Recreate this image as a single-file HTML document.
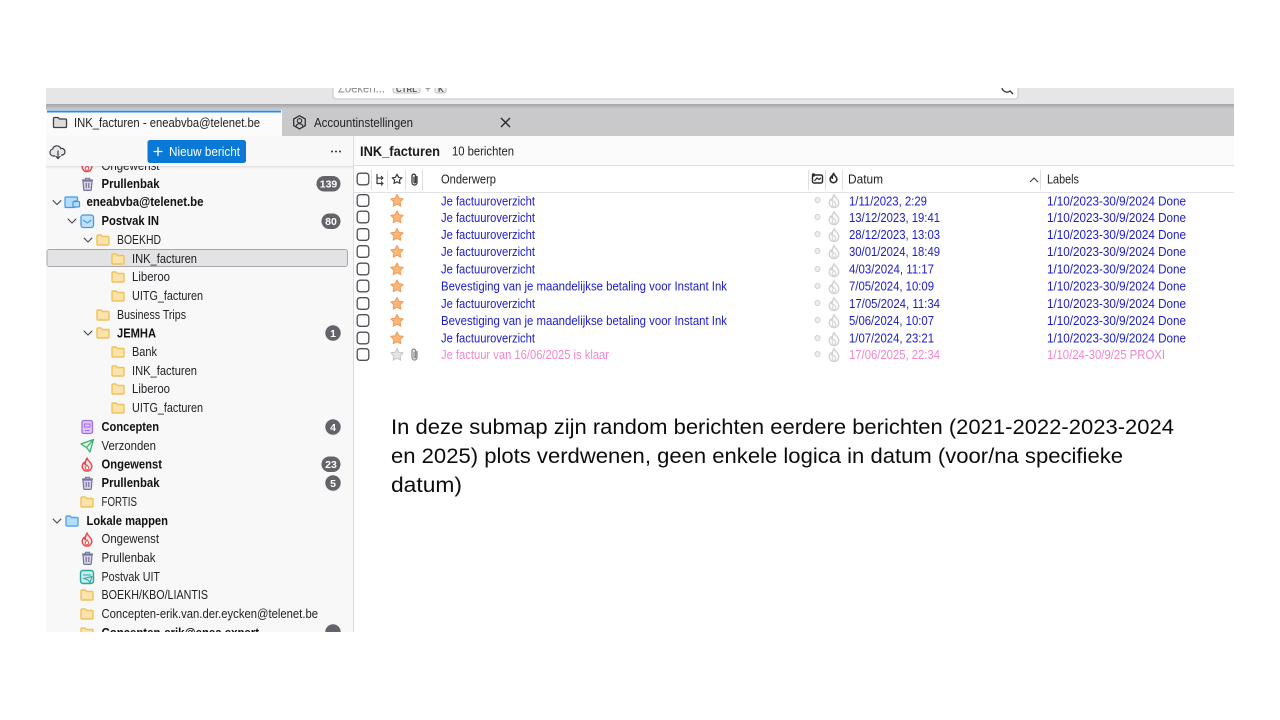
<!DOCTYPE html>
<html lang="nl"><head><meta charset="utf-8"><title>INK_facturen</title>
<style>
html,body{margin:0;padding:0;background:#fff;width:1280px;height:720px;overflow:hidden}
svg{display:block;filter:blur(.3px)}
text{font-family:"Liberation Sans",sans-serif;font-size:12.6px;fill:#222226}
.b{font-weight:bold;fill:#111114}
.r{fill:#1c1cca}
.p{fill:#f286cb}
.w{fill:#fff;font-weight:bold;font-size:10.5px;text-anchor:middle}
.big{font-size:21.5px;fill:#0c0c0c}
</style></head><body>
<svg width="1280" height="720" viewBox="0 0 1280 720" xmlns="http://www.w3.org/2000/svg">
<defs>
<linearGradient id="sh" x1="0" y1="0" x2="0" y2="1"><stop offset="0" stop-color="#000" stop-opacity=".1"/><stop offset="1" stop-color="#000" stop-opacity="0"/></linearGradient>
<linearGradient id="tabsh" x1="0" y1="0" x2="0" y2="1"><stop offset="0" stop-color="#a4a4a6"/><stop offset="1" stop-color="#c9c9cb"/></linearGradient>
<symbol id="folder" viewBox="0 0 14 12" overflow="visible"><path d="M1 3V2a1 1 0 0 1 1-1h3l1.500 1.500H12a1 1 0 0 1 1 1V10a1 1 0 0 1-1 1H2a1 1 0 0 1-1-1z" fill="#fbe3ac" stroke="#f0c35a" stroke-width="1.400"/></symbol>
<symbol id="bfolder" viewBox="0 0 14 12" overflow="visible"><path d="M1 3V2a1 1 0 0 1 1-1h3l1.500 1.500H12a1 1 0 0 1 1 1V10a1 1 0 0 1-1 1H2a1 1 0 0 1-1-1z" fill="#b6dcfa" stroke="#58a6e8" stroke-width="1.400"/></symbol>
<symbol id="trash" viewBox="0 0 14 14" overflow="visible"><path d="M2.500 4h9l-.7 8.500a1 1 0 0 1-1 .9H4.200a1 1 0 0 1-1-.9z" fill="#d6d3ea" stroke="#77749a" stroke-width="1.200"/><path d="M1.500 3h11M5 2.800V1.300h4v1.500M5.700 6v5M8.300 6v5" fill="none" stroke="#77749a" stroke-width="1.200"/></symbol>
<symbol id="fire" viewBox="0 0 14 14" overflow="visible"><path d="M7 .8c.6 2.500 4.800 4 4.800 8a4.800 4.800 0 0 1-9.600 0c0-1.800 1-3 1.800-3.800.2 1 .6 1.600 1.300 2C5.200 4.800 5.800 2.500 7 .8z" fill="#fde3e3" stroke="#e5484d" stroke-width="1.400"/><path d="M7 7.500c.4 1 1.800 1.600 1.800 3a1.800 1.800 0 0 1-3.600 0c0-1.200 1.300-1.800 1.800-3z" fill="#fff" stroke="#e5484d" stroke-width="1"/></symbol>
<symbol id="gfire" viewBox="0 0 14 14" overflow="visible"><path d="M7 .8c.6 2.500 4.800 4 4.800 8a4.800 4.800 0 0 1-9.600 0c0-1.800 1-3 1.800-3.800.2 1 .6 1.600 1.300 2C5.200 4.800 5.800 2.500 7 .8z" fill="#fafafa" stroke="#d0d0d4" stroke-width="1.300"/><path d="M7 7.500c.4 1 1.800 1.600 1.800 3a1.800 1.800 0 0 1-3.600 0c0-1.200 1.300-1.800 1.800-3z" fill="#fff" stroke="#d0d0d4" stroke-width="1"/></symbol>
<symbol id="star" viewBox="0 0 14 14" overflow="visible"><path d="M7 .9l1.900 3.900 4.300.6-3.100 3 .7 4.300L7 10.700l-3.800 2 .7-4.300-3.100-3 4.300-.6z" fill="#fdb578" stroke="#f09a58" stroke-width="1" stroke-linejoin="round"/></symbol>
<symbol id="gstar" viewBox="0 0 14 14" overflow="visible"><path d="M7 .9l1.900 3.900 4.300.6-3.100 3 .7 4.300L7 10.700l-3.800 2 .7-4.300-3.100-3 4.300-.6z" fill="#e6e6ea" stroke="#c4c4ca" stroke-width="1" stroke-linejoin="round"/></symbol>
<symbol id="clip" viewBox="0 0 10 14" overflow="visible"><path d="M7.500 4v6a2.500 2.500 0 0 1-5 0V3.500a1.800 1.800 0 0 1 3.600 0V9.500a.8.8 0 0 1-1.600 0V4.500" fill="none" stroke="currentColor" stroke-width="1.300" stroke-linecap="round"/></symbol>
<symbol id="cb" viewBox="0 0 13 13" overflow="visible"><rect x=".7" y=".7" width="11.600" height="11.600" rx="2.800" fill="#fff" stroke="#4e4e55" stroke-width="1.300"/></symbol>
<symbol id="chev" viewBox="0 0 10 6" overflow="visible"><path d="M.8.800L5 5l4.200-4.200" fill="none" stroke="#4a4a50" stroke-width="1.100"/></symbol>
</defs>

<rect x="46" y="88" width="1188" height="544" fill="#fff"/>
<!-- top bar -->
<rect x="46" y="88" width="1188" height="16" fill="#e6e6e8"/>
<path d="M333 86v10a3 3 0 0 0 3 3h679a3 3 0 0 0 3-3V86z" fill="#fff" stroke="#c6c6c8"/>
<text x="338" y="92.500" style="fill:#8a8a8e" textLength="47" lengthAdjust="spacingAndGlyphs">Zoeken...</text>
<rect x="393" y="85" width="27" height="8" rx="2" fill="#eee" stroke="#aaa" stroke-width=".7"/>
<text x="396" y="92" style="font-size:8px;font-weight:bold;fill:#555" textLength="21" lengthAdjust="spacingAndGlyphs">CTRL</text>
<text x="425" y="92.500" style="fill:#777;font-size:10px">+</text>
<rect x="435" y="85" width="11" height="8" rx="2" fill="#eee" stroke="#aaa" stroke-width=".7"/>
<text x="438" y="92" style="font-size:8px;font-weight:bold;fill:#555">K</text>
<path d="M1002 88a5 5 0 0 0 8 3l3 3" fill="none" stroke="#333" stroke-width="1.300"/>
<rect x="0" y="0" width="1280" height="88" fill="#fff"/>
<!-- tabs -->
<rect x="46" y="104" width="1188" height="32" fill="#c9c9cb"/>
<rect x="46" y="104" width="1188" height="5" fill="url(#tabsh)"/>
<rect x="46" y="110" width="236" height="26" fill="#fbfbfb"/>
<rect x="47" y="110.500" width="234" height="2" fill="#2d8fd8"/>
<path d="M53.500 118.500a1 1 0 0 1 1-1h3.500l1.500 1.500h6a1 1 0 0 1 1 1v6.500a1 1 0 0 1-1 1h-11a1 1 0 0 1-1-1z" fill="#dcdcde" stroke="#3d3d42" stroke-width="1.300"/>
<text x="74" y="127" textLength="186" lengthAdjust="spacingAndGlyphs">INK_facturen - eneabvba@telenet.be</text>
<path d="M299.500 115.700l5.800 3.300v6.600l-5.800 3.300-5.800-3.300V119z" fill="none" stroke="#2f2f34" stroke-width="1.300"/>
<circle cx="299.500" cy="120.800" r="2.200" fill="none" stroke="#2f2f34" stroke-width="1.100"/>
<path d="M296 126.500c.5-2 1.800-2.800 3.500-2.800s3 .8 3.500 2.800" fill="none" stroke="#2f2f34" stroke-width="1.100"/>
<text x="314" y="127" textLength="99" lengthAdjust="spacingAndGlyphs">Accountinstellingen</text>
<path d="M501 118l9 9M510 118l-9 9" stroke="#2a2a2e" stroke-width="1.400"/>

<!-- sidebar -->
<rect x="46" y="136" width="307" height="496" fill="#f8f8f9"/>
<rect x="353" y="136" width="1" height="496" fill="#dcdcde"/>

<!-- tree rows -->
<use href="#fire" x="80" y="158" width="14" height="14"/>
<text x="101.500" y="170" textLength="58" lengthAdjust="spacingAndGlyphs">Ongewenst</text>
<rect x="46" y="136" width="307" height="30" fill="#f8f8f9"/>
<rect x="46" y="166" width="307" height="3" fill="url(#sh)"/>
<path d="M55 156h-1.500a3.500 3.500 0 0 1-.8-6.900 4.200 4.200 0 0 1 8-.6 3.300 3.300 0 0 1 1.800 6.500h-1.500" fill="#e8e8ea" stroke="#3c3c41" stroke-width="1.200"/>
<path d="M58 150.500v8m-2.500-2.500l2.500 2.500 2.500-2.500" fill="none" stroke="#3c3c41" stroke-width="1.200"/>
<rect x="147.500" y="140" width="98.500" height="23" rx="2.500" fill="#0a78d6"/>
<path d="M153.500 151.500h9M158 147v9" stroke="#fff" stroke-width="1.300"/>
<text x="169" y="156" style="fill:#fff" textLength="71" lengthAdjust="spacingAndGlyphs">Nieuw bericht</text>
<circle cx="332" cy="151.500" r="1" fill="#333"/><circle cx="336" cy="151.500" r="1" fill="#333"/><circle cx="340" cy="151.500" r="1" fill="#333"/>

<use href="#trash" x="80.500" y="177" width="14" height="14"/>
<text class="b" x="101.500" y="188" textLength="58" lengthAdjust="spacingAndGlyphs">Prullenbak</text>
<rect x="316.500" y="176" width="24" height="15.500" rx="7.700" fill="#636369"/><text class="w" x="328.500" y="187.500">139</text>

<use href="#chev" x="52" y="199.500" width="10" height="6"/>
<path d="M66 197h10.500a1 1 0 0 1 1 1v3h-3v6.500H66a1 1 0 0 1-1-1V198a1 1 0 0 1 1-1z" fill="#b6dcfa" stroke="#3f9be6" stroke-width="1.200"/>
<rect x="73" y="201.500" width="6.500" height="5.500" rx="1" fill="#b6dcfa" stroke="#3f9be6" stroke-width="1.200"/>
<text class="b" x="86.500" y="206" textLength="117" lengthAdjust="spacingAndGlyphs">eneabvba@telenet.be</text>

<use href="#chev" x="67" y="218" width="10" height="6"/>
<rect x="81" y="215" width="12.500" height="12.500" rx="2.500" fill="#c4e0fa" stroke="#3f9be6" stroke-width="1.300"/>
<path d="M83 220l4.200 3 4.200-3" fill="none" stroke="#3f9be6" stroke-width="1.100"/>
<text class="b" x="101.500" y="225" textLength="57.500" lengthAdjust="spacingAndGlyphs">Postvak IN</text>
<rect x="321.500" y="213.500" width="19" height="15.500" rx="7.700" fill="#636369"/><text class="w" x="331" y="225">80</text>

<use href="#chev" x="83" y="237" width="10" height="6"/>
<use href="#folder" x="96" y="234" width="14" height="12"/>
<text x="117" y="244" textLength="44" lengthAdjust="spacingAndGlyphs">BOEKHD</text>

<rect x="47" y="249.500" width="300.500" height="17" rx="2.500" fill="#e3e3e5" stroke="#a8a8ac"/>
<use href="#folder" x="111" y="253" width="14" height="12"/>
<text x="132" y="263" textLength="65" lengthAdjust="spacingAndGlyphs">INK_facturen</text>

<use href="#folder" x="111" y="271" width="14" height="12"/>
<text x="132" y="281" textLength="38" lengthAdjust="spacingAndGlyphs">Liberoo</text>
<use href="#folder" x="111" y="290" width="14" height="12"/>
<text x="132" y="300" textLength="71" lengthAdjust="spacingAndGlyphs">UITG_facturen</text>
<use href="#folder" x="96" y="309" width="14" height="12"/>
<text x="117" y="319" textLength="69" lengthAdjust="spacingAndGlyphs">Business Trips</text>

<use href="#chev" x="83" y="330" width="10" height="6"/>
<use href="#folder" x="96" y="327" width="14" height="12"/>
<text class="b" x="117" y="337.500" textLength="39" lengthAdjust="spacingAndGlyphs">JEMHA</text>
<circle cx="333" cy="333" r="7.700" fill="#636369"/><text class="w" x="333" y="337">1</text>

<use href="#folder" x="111" y="346" width="14" height="12"/>
<text x="132" y="356" textLength="25" lengthAdjust="spacingAndGlyphs">Bank</text>
<use href="#folder" x="111" y="365" width="14" height="12"/>
<text x="132" y="375" textLength="65" lengthAdjust="spacingAndGlyphs">INK_facturen</text>
<use href="#folder" x="111" y="383" width="14" height="12"/>
<text x="132" y="393" textLength="38" lengthAdjust="spacingAndGlyphs">Liberoo</text>
<use href="#folder" x="111" y="402" width="14" height="12"/>
<text x="132" y="412" textLength="71" lengthAdjust="spacingAndGlyphs">UITG_facturen</text>

<rect x="82" y="420.500" width="10.500" height="13" rx="1.800" fill="#dcc6f9" stroke="#a56de2" stroke-width="1.300"/>
<path d="M84.500 424h5.500v3h-5.500zM85 430.500h4.500" fill="none" stroke="#a56de2" stroke-width="1"/>
<text class="b" x="101.500" y="431" textLength="57.500" lengthAdjust="spacingAndGlyphs">Concepten</text>
<circle cx="333" cy="427" r="7.700" fill="#636369"/><text class="w" x="333" y="431">4</text>

<path d="M81 444l12.500-4.500-3.500 12.500-3.500-4.500zM86.500 447.500l7-8" fill="#e2f7ea" stroke="#38b36b" stroke-width="1.300" stroke-linejoin="round"/>
<text x="101.500" y="450" textLength="54.500" lengthAdjust="spacingAndGlyphs">Verzonden</text>

<use href="#fire" x="80" y="457.500" width="14" height="14"/>
<text class="b" x="101.500" y="468.500" textLength="60.500" lengthAdjust="spacingAndGlyphs">Ongewenst</text>
<rect x="321.500" y="456.500" width="19" height="15.500" rx="7.700" fill="#636369"/><text class="w" x="331" y="468">23</text>

<use href="#trash" x="80.500" y="476" width="14" height="14"/>
<text class="b" x="101.500" y="487" textLength="58" lengthAdjust="spacingAndGlyphs">Prullenbak</text>
<circle cx="333" cy="483" r="7.700" fill="#636369"/><text class="w" x="333" y="487">5</text>

<use href="#folder" x="80" y="496" width="14" height="12"/>
<text x="101.500" y="506" textLength="35.500" lengthAdjust="spacingAndGlyphs">FORTIS</text>

<use href="#chev" x="52" y="518" width="10" height="6"/>
<use href="#bfolder" x="65" y="515" width="14" height="12"/>
<text class="b" x="86.500" y="525" textLength="81.500" lengthAdjust="spacingAndGlyphs">Lokale mappen</text>

<use href="#fire" x="80" y="532.500" width="14" height="14"/>
<text x="101.500" y="543" textLength="57.500" lengthAdjust="spacingAndGlyphs">Ongewenst</text>
<use href="#trash" x="80.500" y="551" width="14" height="14"/>
<text x="101.500" y="562" textLength="54" lengthAdjust="spacingAndGlyphs">Prullenbak</text>

<rect x="80.500" y="570.500" width="13" height="13" rx="2.500" fill="#c8ecea" stroke="#2ba6a0" stroke-width="1.400"/>
<path d="M83 575h8M84 578.500l8-2-2 6-2-2.500z" fill="#c8ecea" stroke="#2ba6a0" stroke-width="1"/>
<text x="101.500" y="581" textLength="58.500" lengthAdjust="spacingAndGlyphs">Postvak UIT</text>

<use href="#folder" x="80" y="589" width="14" height="12"/>
<text x="101.500" y="599" textLength="106.500" lengthAdjust="spacingAndGlyphs">BOEKH/KBO/LIANTIS</text>
<use href="#folder" x="80" y="608" width="14" height="12"/>
<text x="101.500" y="618" textLength="216.500" lengthAdjust="spacingAndGlyphs">Concepten-erik.van.der.eycken@telenet.be</text>
<use href="#folder" x="80" y="627" width="14" height="12"/>
<text class="b" x="101.500" y="637" textLength="157.500" lengthAdjust="spacingAndGlyphs">Concepten-erik@enea.expert</text>
<circle cx="333" cy="632" r="7.700" fill="#636369"/>
<rect x="0" y="632" width="1280" height="88" fill="#fff"/>

<!-- list header -->
<rect x="354" y="136" width="880" height="29" fill="#fbfbfb"/>
<rect x="354" y="165" width="880" height="1" fill="#dedee0"/>
<text x="360" y="156" style="font-size:14px;font-weight:bold;fill:#1b1b1f" textLength="80" lengthAdjust="spacingAndGlyphs">INK_facturen</text>
<text x="452" y="155.500" textLength="62" lengthAdjust="spacingAndGlyphs">10 berichten</text>

<!-- columns -->
<rect x="354" y="192" width="880" height="1" fill="#e2e2e4"/>
<use href="#cb" x="356.500" y="172.500" width="13" height="13"/>
<g fill="#dedee0"><rect x="371" y="170" width="1" height="20"/><rect x="387" y="170" width="1" height="20"/><rect x="405" y="170" width="1" height="20"/><rect x="422" y="170" width="1" height="20"/><rect x="808" y="170" width="1" height="20"/><rect x="825" y="170" width="1" height="20"/><rect x="842" y="170" width="1" height="20"/><rect x="1040" y="170" width="1" height="20"/></g>
<path d="M377 174v9.500h6M377 178h6" fill="none" stroke="#3a3a40" stroke-width="1.200"/>
<path d="M381 176l2 2-2 2M381 181.500l2 2-2 2" fill="none" stroke="#3a3a40" stroke-width="1"/>
<path d="M397 174.300l1.500 3 3.300.5-2.400 2.300.6 3.300-3-1.600-3 1.600.6-3.300-2.400-2.300 3.300-.5z" fill="none" stroke="#3a3a40" stroke-width="1.200" stroke-linejoin="round"/>
<use href="#clip" x="409.500" y="172.500" width="10" height="14" style="color:#3a3a40"/>
<text x="441" y="183.500" textLength="55" lengthAdjust="spacingAndGlyphs">Onderwerp</text>
<rect x="812.500" y="175" width="10" height="8" rx="1.500" fill="none" stroke="#2b2b30" stroke-width="1.400"/>
<path d="M814.500 181l2.500-3 2 1.500 2-1.500" fill="none" stroke="#2b2b30" stroke-width="1.200"/>
<circle cx="813.500" cy="175" r="1.700" fill="#2b2b30"/>
<path d="M833.500 173.500c.4 2 3.400 3 3.400 5.800a3.400 3.400 0 0 1-6.800 0c0-1.400.7-2.200 1.300-2.800.2.700.4 1.100.9 1.400-.1-1.400.3-3 1.200-4.400z" fill="none" stroke="#2b2b30" stroke-width="1.600"/>
<text x="848" y="183.500" textLength="35" lengthAdjust="spacingAndGlyphs">Datum</text>
<path d="M1030 182l4-4 4 4" fill="none" stroke="#3a3a40" stroke-width="1.100"/>
<text x="1047" y="183.500" textLength="32" lengthAdjust="spacingAndGlyphs">Labels</text>

<!-- rows -->
<g id="rows">
<use href="#cb" x="356.500" y="194" width="13" height="13"/><use href="#star" x="390" y="193.500" width="14" height="14"/><circle cx="817.500" cy="200" r="2.500" fill="#eee" stroke="#cfcfd2"/><use href="#gfire" x="827" y="194" width="14" height="14"/>
<text class="r" x="441" y="205.500" textLength="94" lengthAdjust="spacingAndGlyphs">Je factuuroverzicht</text><text class="r" x="849" y="205.500" textLength="78" lengthAdjust="spacingAndGlyphs">1/11/2023, 2:29</text><text class="r" x="1047" y="205.500" textLength="139" lengthAdjust="spacingAndGlyphs">1/10/2023-30/9/2024 Done</text>

<use href="#cb" x="356.500" y="210.500" width="13" height="13"/><use href="#star" x="390" y="210" width="14" height="14"/><circle cx="817.500" cy="217" r="2.500" fill="#eee" stroke="#cfcfd2"/><use href="#gfire" x="827" y="211" width="14" height="14"/>
<text class="r" x="441" y="222" textLength="94" lengthAdjust="spacingAndGlyphs">Je factuuroverzicht</text><text class="r" x="849" y="222" textLength="91" lengthAdjust="spacingAndGlyphs">13/12/2023, 19:41</text><text class="r" x="1047" y="222" textLength="139" lengthAdjust="spacingAndGlyphs">1/10/2023-30/9/2024 Done</text>

<use href="#cb" x="356.500" y="228" width="13" height="13"/><use href="#star" x="390" y="227.500" width="14" height="14"/><circle cx="817.500" cy="234" r="2.500" fill="#eee" stroke="#cfcfd2"/><use href="#gfire" x="827" y="228" width="14" height="14"/>
<text class="r" x="441" y="239" textLength="94" lengthAdjust="spacingAndGlyphs">Je factuuroverzicht</text><text class="r" x="849" y="239" textLength="91" lengthAdjust="spacingAndGlyphs">28/12/2023, 13:03</text><text class="r" x="1047" y="239" textLength="139" lengthAdjust="spacingAndGlyphs">1/10/2023-30/9/2024 Done</text>

<use href="#cb" x="356.500" y="245" width="13" height="13"/><use href="#star" x="390" y="244.500" width="14" height="14"/><circle cx="817.500" cy="251" r="2.500" fill="#eee" stroke="#cfcfd2"/><use href="#gfire" x="827" y="245" width="14" height="14"/>
<text class="r" x="441" y="256" textLength="94" lengthAdjust="spacingAndGlyphs">Je factuuroverzicht</text><text class="r" x="849" y="256" textLength="91" lengthAdjust="spacingAndGlyphs">30/01/2024, 18:49</text><text class="r" x="1047" y="256" textLength="139" lengthAdjust="spacingAndGlyphs">1/10/2023-30/9/2024 Done</text>

<use href="#cb" x="356.500" y="262.500" width="13" height="13"/><use href="#star" x="390" y="262" width="14" height="14"/><circle cx="817.500" cy="269" r="2.500" fill="#eee" stroke="#cfcfd2"/><use href="#gfire" x="827" y="263" width="14" height="14"/>
<text class="r" x="441" y="273.500" textLength="94" lengthAdjust="spacingAndGlyphs">Je factuuroverzicht</text><text class="r" x="849" y="273.500" textLength="85" lengthAdjust="spacingAndGlyphs">4/03/2024, 11:17</text><text class="r" x="1047" y="273.500" textLength="139" lengthAdjust="spacingAndGlyphs">1/10/2023-30/9/2024 Done</text>

<use href="#cb" x="356.500" y="279.500" width="13" height="13"/><use href="#star" x="390" y="279" width="14" height="14"/><circle cx="817.500" cy="286" r="2.500" fill="#eee" stroke="#cfcfd2"/><use href="#gfire" x="827" y="280" width="14" height="14"/>
<text class="r" x="441" y="290.500" textLength="286" lengthAdjust="spacingAndGlyphs">Bevestiging van je maandelijkse betaling voor Instant Ink</text><text class="r" x="849" y="290.500" textLength="85" lengthAdjust="spacingAndGlyphs">7/05/2024, 10:09</text><text class="r" x="1047" y="290.500" textLength="139" lengthAdjust="spacingAndGlyphs">1/10/2023-30/9/2024 Done</text>

<use href="#cb" x="356.500" y="297" width="13" height="13"/><use href="#star" x="390" y="296.500" width="14" height="14"/><circle cx="817.500" cy="303" r="2.500" fill="#eee" stroke="#cfcfd2"/><use href="#gfire" x="827" y="297" width="14" height="14"/>
<text class="r" x="441" y="308" textLength="94" lengthAdjust="spacingAndGlyphs">Je factuuroverzicht</text><text class="r" x="849" y="308" textLength="91" lengthAdjust="spacingAndGlyphs">17/05/2024, 11:34</text><text class="r" x="1047" y="308" textLength="139" lengthAdjust="spacingAndGlyphs">1/10/2023-30/9/2024 Done</text>

<use href="#cb" x="356.500" y="314" width="13" height="13"/><use href="#star" x="390" y="313.500" width="14" height="14"/><circle cx="817.500" cy="320" r="2.500" fill="#eee" stroke="#cfcfd2"/><use href="#gfire" x="827" y="314" width="14" height="14"/>
<text class="r" x="441" y="325" textLength="286" lengthAdjust="spacingAndGlyphs">Bevestiging van je maandelijkse betaling voor Instant Ink</text><text class="r" x="849" y="325" textLength="85" lengthAdjust="spacingAndGlyphs">5/06/2024, 10:07</text><text class="r" x="1047" y="325" textLength="139" lengthAdjust="spacingAndGlyphs">1/10/2023-30/9/2024 Done</text>

<use href="#cb" x="356.500" y="331.500" width="13" height="13"/><use href="#star" x="390" y="331" width="14" height="14"/><circle cx="817.500" cy="338" r="2.500" fill="#eee" stroke="#cfcfd2"/><use href="#gfire" x="827" y="332" width="14" height="14"/>
<text class="r" x="441" y="342.500" textLength="94" lengthAdjust="spacingAndGlyphs">Je factuuroverzicht</text><text class="r" x="849" y="342.500" textLength="85" lengthAdjust="spacingAndGlyphs">1/07/2024, 23:21</text><text class="r" x="1047" y="342.500" textLength="139" lengthAdjust="spacingAndGlyphs">1/10/2023-30/9/2024 Done</text>

<use href="#cb" x="356.500" y="348" width="13" height="13"/><use href="#gstar" x="390" y="347.500" width="14" height="14"/><use href="#clip" x="409.500" y="347.500" width="10" height="14" style="color:#8c8c92"/><circle cx="817.500" cy="354" r="2.500" fill="#eee" stroke="#cfcfd2"/><use href="#gfire" x="827" y="348" width="14" height="14"/>
<text class="p" x="441" y="359" textLength="168" lengthAdjust="spacingAndGlyphs">Je factuur van 16/06/2025 is klaar</text><text class="p" x="849" y="359" textLength="91" lengthAdjust="spacingAndGlyphs">17/06/2025, 22:34</text><text class="p" x="1047" y="359" textLength="118" lengthAdjust="spacingAndGlyphs">1/10/24-30/9/25 PROXI</text>
</g>

<!-- note -->
<text class="big" x="391" y="434" textLength="783" lengthAdjust="spacingAndGlyphs">In deze submap zijn random berichten eerdere berichten (2021-2022-2023-2024</text>
<text class="big" x="391" y="463" textLength="732" lengthAdjust="spacingAndGlyphs">en 2025) plots verdwenen, geen enkele logica in datum (voor/na specifieke</text>
<text class="big" x="391" y="492" textLength="71" lengthAdjust="spacingAndGlyphs">datum)</text>
</svg>
</body></html>
